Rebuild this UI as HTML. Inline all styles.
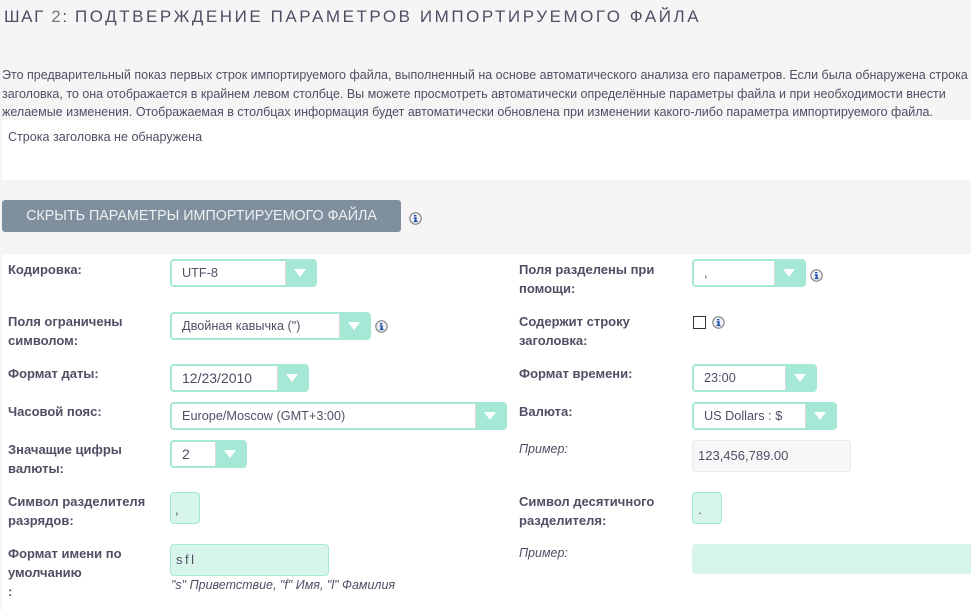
<!DOCTYPE html>
<html lang="ru"><head><meta charset="utf-8"><title>Шаг 2</title>
<style>
html,body{margin:0;padding:0}
body{width:971px;height:610px;position:relative;overflow:hidden;background:#f5f5f5;font-family:"Liberation Sans",Arial,sans-serif;color:#534d64;font-size:12px}
.a{position:absolute;white-space:nowrap}
.l{font-weight:bold;font-size:13px;line-height:19px}
.s{position:absolute;box-sizing:border-box;height:28px;background:#fff;border:2px solid #a5e8d6;border-radius:4px;font-size:12.7px;line-height:24px;padding-left:10px;white-space:nowrap;overflow:hidden}
.s i{position:absolute;right:0;top:-2px;height:28px;width:30px;background:#a5e8d6;border-left:1px solid #d8d8d8;box-sizing:border-box}
.s i:after{content:"";position:absolute;left:8px;top:10px;border-left:6.5px solid transparent;border-right:6.5px solid transparent;border-top:8px solid #fff}
.t{position:absolute;box-sizing:border-box;background:#d8f5ec;border:1px solid #a5e8d6;border-radius:4px;font-size:13px;white-space:nowrap}
svg.n{position:absolute;width:13px;height:13px}
</style></head><body>
<div class="a" style="left:4px;top:7px;font-size:17px;line-height:20px;letter-spacing:2.55px;color:#534d64"><span style="letter-spacing:1.6px">ШАГ <span style="color:#777">2</span>: </span>ПОДТВЕРЖДЕНИЕ ПАРАМЕТРОВ ИМПОРТИРУЕМОГО ФАЙЛА</div>
<div class="a" style="left:2px;top:66px;line-height:18.5px;font-size:12.5px">Это предварительный показ первых строк импортируемого файла, выполненный на основе автоматического анализа его параметров. Если была обнаружена строка<br>заголовка, то она отображается в крайнем левом столбце. Вы можете просмотреть автоматически определённые параметры файла и при необходимости внести<br>желаемые изменения. Отображаемая в столбцах информация будет автоматически обновлена при изменении какого-либо параметра импортируемого файла.</div>
<div class="a" style="left:2px;top:120px;width:969px;height:60px;background:#fff"></div>
<div class="a" style="left:8px;top:129px;line-height:16px;font-size:12.55px">Строка заголовка не обнаружена</div>
<div class="a" style="left:2px;top:200px;width:399px;height:32px;background:#808f9d;border-radius:3px;color:#eef1f3;font-size:14.3px;line-height:33px;text-align:center">СКРЫТЬ ПАРАМЕТРЫ ИМПОРТИРУЕМОГО ФАЙЛА</div>
<svg class="n" style="left:409px;top:212px" viewBox="0 0 13 13"><circle cx="6.5" cy="6.5" r="5.7" fill="#eef0f4" stroke="#777" stroke-width="1"/><path d="M5 3h2.4v1.4H5zM4.8 5.3h2.8v3.6h1v1.2H4.6V8.9h1V6.5h-.8z" fill="#1c4fa8"/></svg>

<div class="a" style="left:2px;top:254px;width:969px;height:356px;background:#fff"></div>

<div class="a l" style="left:8px;top:260px">Кодировка:</div>
<div class="s" style="left:170px;top:259px;width:147px">UTF-8<i></i></div>
<div class="a l" style="left:8px;top:312px">Поля ограничены<br>символом:</div>
<div class="s" style="left:170px;top:312px;width:201px">Двойная кавычка (")<i></i></div>
<svg class="n" style="left:375px;top:320px" viewBox="0 0 13 13"><circle cx="6.5" cy="6.5" r="5.7" fill="#eef0f4" stroke="#777" stroke-width="1"/><path d="M5 3h2.4v1.4H5zM4.8 5.3h2.8v3.6h1v1.2H4.6V8.9h1V6.5h-.8z" fill="#1c4fa8"/></svg>
<div class="a l" style="left:8px;top:364px">Формат даты:</div>
<div class="s" style="left:170px;top:364px;width:139px;font-size:14px">12/23/2010<i></i></div>
<div class="a l" style="left:8px;top:402px">Часовой пояс:</div>
<div class="s" style="left:170px;top:402px;width:337px">Europe/Moscow (GMT+3:00)<i></i></div>
<div class="a l" style="left:8px;top:440px">Значащие цифры<br>валюты:</div>
<div class="s" style="left:170px;top:440px;width:77px;font-size:14px">2<i></i></div>
<div class="a l" style="left:8px;top:492px">Символ разделителя<br>разрядов:</div>
<div class="t" style="left:170px;top:492px;width:30px;height:32px;line-height:33px;padding-left:4px">,</div>
<div class="a l" style="left:8px;top:544px">Формат имени по<br>умолчанию<br>:</div>
<div class="t" style="left:170px;top:544px;width:159px;height:32px;line-height:30px;padding-left:5px;letter-spacing:2.5px">sfl</div>
<div class="a" style="left:171px;top:578px;font-style:italic;font-size:12.5px;line-height:15px">"s" Приветствие, "f" Имя, "l" Фамилия</div>

<div class="a l" style="left:519px;top:260px">Поля разделены при<br>помощи:</div>
<div class="s" style="left:692px;top:259px;width:114px">,<i></i></div>
<svg class="n" style="left:810px;top:269px" viewBox="0 0 13 13"><circle cx="6.5" cy="6.5" r="5.7" fill="#eef0f4" stroke="#777" stroke-width="1"/><path d="M5 3h2.4v1.4H5zM4.8 5.3h2.8v3.6h1v1.2H4.6V8.9h1V6.5h-.8z" fill="#1c4fa8"/></svg>
<div class="a l" style="left:519px;top:312px">Содержит строку<br>заголовка:</div>
<div class="a" style="left:693px;top:316px;width:13px;height:13px;box-sizing:border-box;border:1px solid #333;background:#fff"></div>
<svg class="n" style="left:712px;top:316px" viewBox="0 0 13 13"><circle cx="6.5" cy="6.5" r="5.7" fill="#eef0f4" stroke="#777" stroke-width="1"/><path d="M5 3h2.4v1.4H5zM4.8 5.3h2.8v3.6h1v1.2H4.6V8.9h1V6.5h-.8z" fill="#1c4fa8"/></svg>
<div class="a l" style="left:519px;top:364px">Формат времени:</div>
<div class="s" style="left:692px;top:364px;width:125px">23:00<i></i></div>
<div class="a l" style="left:519px;top:402px">Валюта:</div>
<div class="s" style="left:692px;top:402px;width:145px">US Dollars : $<i></i></div>
<div class="a" style="left:519px;top:440px;font-style:italic;font-size:12.5px;line-height:19px">Пример:</div>
<div class="t" style="left:692px;top:440px;width:159px;height:32px;background:#f7f7f8;border-color:#e9eaee;line-height:30px;padding-left:5px">123,456,789.00</div>
<div class="a l" style="left:519px;top:492px">Символ десятичного<br>разделителя:</div>
<div class="t" style="left:692px;top:492px;width:30px;height:32px;line-height:33px;padding-left:5px">.</div>
<div class="a" style="left:519px;top:544px;font-style:italic;font-size:12.5px;line-height:19px">Пример:</div>
<div class="t" style="left:692px;top:544px;width:285px;height:30px;border-color:#d8f5ec"></div>
</body></html>
